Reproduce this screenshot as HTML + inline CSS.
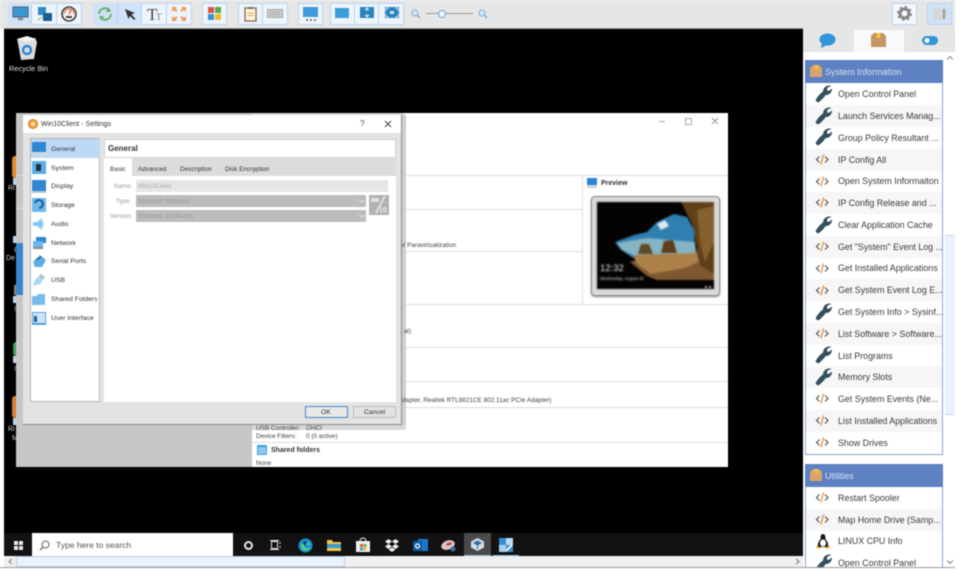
<!DOCTYPE html>
<html><head><meta charset="utf-8"><title>Win10Client</title>
<style>
html,body{margin:0;padding:0;background:#fff}
#r{position:relative;width:960px;height:573px;overflow:hidden;background:#fff;font-family:"Liberation Sans",sans-serif;filter:blur(.5px)}
#r div,#r svg,#r span{position:absolute}
.t{white-space:nowrap;line-height:1}
.g{background:#eef4fc;border:1px solid #bcd3ef;box-sizing:border-box;top:3px;height:22px}
.b{top:3px;height:22px;border-right:1px solid #bcd3ef;box-sizing:border-box}
.on{background:#cfe2f8}
.it{left:838px;font-size:8.9px;color:#3a3a3a}
.n{left:51px;font-size:6.8px;color:#333}
.d{font-size:6.4px;color:#444}
.l{background:#dcdcdc;height:1px}
</style></head><body><div id="r">
<svg width="0" height="0" style="left:0;top:0">
<defs>
<g id="w"><path d="M1 15.500 L3 17 C5 16 9 12 10.500 9.500 C13 10 16 8 16.500 4.500 L13.500 6.500 L11.500 5.500 L12 2.500 L15 1 C11.500 .5 8.500 3 8.500 6.500 C6 8.500 2.500 12 1 15.500Z" fill="#34505c" stroke="#34505c" stroke-width=".9"/></g>
<g id="c"><path d="M4.500 3.500 L1.500 6.500 L4.500 9.500" fill="none" stroke="#555" stroke-width="1.200"/><path d="M10 3.500 L13 6.500 L10 9.500" fill="none" stroke="#555" stroke-width="1.200"/><path d="M8.500 1.500 L6 11.500" fill="none" stroke="#e88a2e" stroke-width="1.200"/></g>
<g id="bx"><path d="M1 4 L4 1 H13 L16 4 V15 H1Z" fill="#c49565"/><path d="M7 1 H10 L10.500 6 H6.500Z" fill="#f4c93c"/></g>
</defs></svg>

<!-- toolbar -->
<div style="left:0;top:0;width:955px;height:29px;background:#e6e6e6"></div>
<div style="left:4px;top:28px;width:799px;height:1px;background:#9a9a9a"></div>

<div class="g" style="left:8px;width:74px"></div>
<div class="b on" style="left:8px;width:24px"></div>
<div class="b" style="left:32px;width:25px"></div>
<svg style="left:12px;top:6px" width="17" height="16"><rect x="1" y="1" width="15" height="10" fill="#3b98d4" stroke="#4a5f70"/><rect x="6" y="12" width="5" height="2" fill="#777"/></svg>
<svg style="left:37px;top:6px" width="16" height="17"><rect x="1" y="1" width="8" height="8" fill="#2d8bc4"/><rect x="6" y="7" width="9" height="8" fill="#14608f"/><path d="M1 14 l4 -3" stroke="#7bbf7b"/></svg>
<svg style="left:61px;top:6px" width="16" height="16"><circle cx="8" cy="8" r="7" fill="#f6f1e8" stroke="#3f3f3f" stroke-width="1.600"/><path d="M3 8 a5 5 0 0 1 10 0" fill="none" stroke="#d46a4a"/><path d="M8 8 L10 4" stroke="#c33"/><rect x="5" y="10" width="6" height="2" fill="#444"/></svg>

<div class="g" style="left:93px;width:99px"></div>
<div class="b on" style="left:93px;width:25px"></div>
<div class="b on" style="left:118px;width:24px"></div>
<div class="b" style="left:142px;width:25px"></div>
<svg style="left:97px;top:6px" width="16" height="16"><path d="M2 8 A6 6 0 0 1 13 5" fill="none" stroke="#6cb36c" stroke-width="2"/><path d="M14 8 A6 6 0 0 1 3 11" fill="none" stroke="#6cb36c" stroke-width="2"/><path d="M11 1 L14 6 L9 6Z M5 15 L2 10 L7 10Z" fill="#6cb36c"/></svg>
<svg style="left:124px;top:8px" width="13" height="13"><path d="M1 1 L11 5 L7.500 6.500 L11.500 11 L10 12 L6 8 L4.500 11Z" fill="#333"/></svg>
<div class="t" style="left:147px;top:5px;font:17px 'Liberation Serif',serif;color:#444">T</div>
<div class="t" style="left:156px;top:12px;font:9px 'Liberation Serif',serif;color:#777">T</div>
<svg style="left:171px;top:6px" width="16" height="16" fill="#ef9a50"><path d="M1 1h5l-1.500 1.500 2 2-1.500 1.500-2-2L1 6Z"/><path d="M15 1h-5l1.500 1.500-2 2 1.500 1.500 2-2L15 6Z"/><path d="M1 15h5l-1.500-1.500 2-2-1.500-1.500-2 2L1 10Z"/><path d="M15 15h-5l1.500-1.500-2-2 1.500-1.500 2 2L15 10Z"/></svg>

<div class="g" style="left:202px;width:25px"></div>
<svg style="left:208px;top:7px" width="13" height="13"><rect width="6" height="6" fill="#d9534a"/><rect x="7" width="6" height="6" fill="#5aa84a"/><rect y="7" width="6" height="6" fill="#3a8fd4"/><rect x="7" y="7" width="6" height="6" fill="#f1bb2a"/></svg>

<div class="g" style="left:238px;width:50px"></div>
<div class="b" style="left:238px;width:25px"></div>
<svg style="left:244px;top:7px" width="13" height="15"><rect x="1" y="1" width="11" height="13" fill="#fbf3e0" stroke="#8a6a48" stroke-width="1.300"/><rect x="4" y="0" width="5" height="2" fill="#8a6a48"/><path d="M3.500 6h6M3.500 8.500h6" stroke="#e2a24a"/></svg>
<svg style="left:267px;top:9px" width="17" height="10"><rect x=".5" y=".5" width="15" height="8" fill="#c9c9c9" stroke="#aaa"/><path d="M3 3h10M3 5.500h10" stroke="#8e8e8e" stroke-dasharray="1 1"/></svg>

<div class="g" style="left:298px;width:25px"></div>
<svg style="left:303px;top:7px" width="16" height="15"><rect width="15" height="10" fill="#3c9bd8"/><path d="M3 13h2M7 13h2M11 13h2" stroke="#556" stroke-width="1.500"/></svg>

<div class="g" style="left:330px;width:74px"></div>
<div class="b" style="left:330px;width:25px"></div>
<div class="b" style="left:355px;width:24px"></div>
<svg style="left:335px;top:8px" width="15" height="11"><rect width="14" height="10" fill="#3c9bd8"/></svg>
<svg style="left:360px;top:7px" width="15" height="12"><rect width="14" height="11" fill="#2a83bc"/><path d="M7 1v3M7 10V7M5 3l2-2 2 2M5 8l2 2 2-2" stroke="#cfe6f5" fill="none"/></svg>
<svg style="left:385px;top:7px" width="15" height="12"><rect width="14" height="11" fill="#2a83bc"/><path d="M1 1h3M1 1v3M13 1h-3M13 1v3M1 10h3M1 10V7M13 10h-3M13 10V7" stroke="#cfe6f5"/><rect x="5" y="4" width="4" height="3" fill="#cfe6f5"/></svg>

<svg style="left:411px;top:9px" width="10" height="10"><circle cx="4" cy="4" r="3" fill="#d4e6f5" stroke="#7fb0d6"/><path d="M6 6l3 3" stroke="#7fb0d6" stroke-width="1.500"/></svg>
<div style="left:426px;top:13px;width:47px;height:1px;background:#999"></div>
<div style="left:438px;top:10px;width:6px;height:6px;border-radius:50%;background:#f1f6fb;border:1px solid #6ea3cf"></div>
<svg style="left:478px;top:9px" width="10" height="10"><circle cx="4" cy="4" r="3" fill="#d4e6f5" stroke="#7fb0d6"/><path d="M6 6l3 3" stroke="#7fb0d6" stroke-width="1.500"/></svg>

<div class="g" style="left:892px;width:25px;background:#f4f8fd"></div>
<svg style="left:897px;top:6px" width="15" height="15"><circle cx="7.500" cy="7.500" r="4.500" fill="none" stroke="#888" stroke-width="3"/><circle cx="7.500" cy="7.500" r="6.500" fill="none" stroke="#888" stroke-width="2" stroke-dasharray="2.500 2.600"/></svg>
<div class="g" style="left:927px;width:25px;background:#cfe2f8"></div>
<div style="left:933px;top:8px;width:14px;height:12px;background:#d8d8d8"></div>
<div style="left:943px;top:9px;width:2px;height:10px;background:#999"></div>

<!-- desktop -->
<div style="left:4px;top:29px;width:799px;height:504px;background:#000"></div>
<svg style="left:15px;top:35px" width="23" height="26"><path d="M2 4 L20 3 L22 7 L19 24 L6 25 L3 8Z" fill="#d9dde0"/><path d="M2 4 L12 1 L21 4 L12 7Z" fill="#f1f3f4"/><circle cx="12" cy="15" r="4" fill="none" stroke="#2a86d8" stroke-width="2.400"/></svg>
<div class="t" style="left:9px;top:65px;font-size:7.400px;color:#ddd">Recycle Bin</div>

<!-- clipped desktop icons -->
<div style="left:12px;top:156px;width:4px;height:22px;background:#e08a30;border-radius:3px 0 0 3px"></div>
<div style="left:13px;top:178px;width:3px;height:7px;background:#bcd4ea"></div>
<div class="t" style="left:8px;top:185px;font-size:7px;color:#ccc">Ri</div>
<div style="left:13px;top:236px;width:3px;height:7px;background:#bcd4ea"></div>
<div class="t" style="left:14px;top:247px;font-size:7px;color:#ccc">C</div>
<div class="t" style="left:6px;top:255px;font-size:7px;color:#ccc">De</div>
<div style="left:14px;top:285px;width:2px;height:10px;background:#8a8a7a"></div>
<div style="left:13px;top:296px;width:3px;height:7px;background:#bcd4ea"></div>
<div class="t" style="left:14px;top:306px;font-size:7px;color:#999">C</div>
<div style="left:13px;top:342px;width:3px;height:14px;background:#3f9a5a;border-radius:3px 0 0 3px"></div>
<div style="left:13px;top:356px;width:3px;height:7px;background:#bcd4ea"></div>
<div class="t" style="left:14px;top:366px;font-size:7px;color:#999">C</div>
<div style="left:12px;top:396px;width:4px;height:22px;background:#d97e30;border-radius:3px 0 0 3px"></div>
<div style="left:13px;top:418px;width:3px;height:7px;background:#bcd4ea"></div>
<div class="t" style="left:8px;top:426px;font-size:7px;color:#ccc">Ri</div>
<div class="t" style="left:12px;top:435px;font-size:7px;color:#ccc">M</div>

<!-- VM window -->
<div style="left:16px;top:113px;width:712px;height:354px;background:#fff"></div>
<div style="left:16px;top:113px;width:236px;height:354px;background:#c6c6c6"></div>
<div style="left:252px;top:113px;width:152px;height:2px;background:#d8d8d8"></div>
<div style="left:16px;top:243px;width:7px;height:52px;background:#3a85cc"></div>
<div style="left:16px;top:175px;width:7px;height:1px;background:#e0e0e0"></div>
<div style="left:16px;top:208px;width:7px;height:1px;background:#e0e0e0"></div>
<div class="l" style="left:400px;top:175px;width:328px"></div>
<div class="l" style="left:400px;top:209px;width:182px"></div>
<div class="l" style="left:400px;top:251px;width:182px"></div>
<div class="l" style="left:400px;top:304px;width:328px"></div>
<div class="l" style="left:400px;top:347px;width:328px"></div>
<div class="l" style="left:400px;top:381px;width:328px"></div>
<div class="l" style="left:400px;top:407px;width:328px"></div>
<div class="l" style="left:252px;top:442px;width:476px"></div>
<div style="left:582px;top:175px;width:1px;height:129px;background:#dcdcdc"></div>
<div style="left:659px;top:121px;width:6px;height:1px;background:#aaa"></div>
<div style="left:685px;top:118px;width:5px;height:5px;border:1px solid #aaa"></div>
<svg style="left:711px;top:117px" width="8" height="8"><path d="M1 1l6 6M7 1l-6 6" stroke="#999"/></svg>
<svg style="left:587px;top:178px" width="10" height="10"><rect width="10" height="7" fill="#2a86d8"/><rect y="7" width="10" height="3" fill="#cfd8e0"/></svg>
<div class="t" style="left:601px;top:180px;font-size:7px;font-weight:bold;color:#333">Preview</div>
<svg style="left:257px;top:445px" width="10" height="10"><rect width="10" height="10" rx="1" fill="#3d9ade"/><rect x="1" y="2" width="8" height="7" fill="#8cc8ef"/></svg>
<div class="t" style="left:271px;top:447px;font-size:7px;font-weight:bold;color:#333">Shared folders</div>
<div class="t d" style="left:256px;top:461px">None</div>

<!-- preview image -->
<div style="left:591px;top:196px;width:129px;height:100px;background:#d9d9d9;border:1px solid #8e8e8e;border-radius:4px;box-sizing:border-box;box-shadow:0 1px 2px #888"></div>
<svg style="left:597px;top:202px;filter:blur(.7px)" width="117" height="87">
<rect width="117" height="87" fill="#050302"/>
<path d="M84 0 H117 V72 L96 66 L100 45 L95 22 Z" fill="#5f4019"/>
<path d="M100 8 L117 4 V40 L108 60 L103 40Z" fill="#84602c"/>
<path d="M33 60 L52 54 L100 54 L104 64 L117 72 V78 L60 78 L50 74Z" fill="#7f5730"/>
<path d="M18 40 L37 33 L50 30 L60 20 L77 12 L90 15 L97 28 L98 45 L100 54 L52 54 L36 56 L23 47Z" fill="#2f7fb0"/>
<path d="M60 22 L68 18 L72 24 L64 28Z" fill="#dfe8ee"/>
<path d="M20 41 L50 36 L98 40 L99 52 L40 55 L25 48Z" fill="#86b4c4"/>
<path d="M36 53 L100 51 L102 60 L88 66 L54 72 L40 62Z" fill="#ad8048"/>
<path d="M41 52 L44 42 L52 42 L56 52Z" fill="#5e4a28"/>
<path d="M64 51 L67 39 L76 38 L80 51Z" fill="#5c3d1e"/>
<text x="3" y="69" font-family="Liberation Sans" font-size="9.500" fill="#e8e8e8">12:32</text>
<text x="3" y="78" font-family="Liberation Sans" font-size="4.300" fill="#cfcfcf">Wednesday, August 26</text>
<rect x="108" y="84" width="2" height="2" fill="#bbb"/><rect x="112" y="84" width="2" height="2" fill="#bbb"/>
</svg>

<!-- settings dialog -->
<div style="left:400px;top:115px;width:6px;height:315px;background:#cfcfcf"></div>
<div style="left:252px;top:425px;width:154px;height:5px;background:#d8d8d8"></div>
<div class="t d" style="left:399px;top:243px">-V Paravirtualization</div>
<div class="t d" style="left:404px;top:329px">al)</div>
<div class="t d" style="left:402px;top:398px">dapter, Realtek RTL8821CE 802.11ac PCIe Adapter)</div>
<div style="left:23px;top:115px;width:379px;height:310px;background:#e3e3e3;border-right:1px solid #888;border-bottom:1px solid #888;box-sizing:border-box"></div>
<div style="left:23px;top:115px;width:378px;height:18px;background:#fff"></div>
<svg style="left:28px;top:119px" width="10" height="10"><circle cx="5" cy="5" r="4.500" fill="#f3a53a" stroke="#c9781a"/><circle cx="5" cy="5" r="2" fill="#fbe6b8"/></svg>
<div class="t" style="left:41px;top:121px;font-size:7.100px;color:#333">Win10Client - Settings</div>
<div class="t" style="left:360px;top:120px;font-size:8px;color:#444">?</div>
<svg style="left:384px;top:120px" width="8" height="8"><path d="M1 1l6 6M7 1l-6 6" stroke="#444"/></svg>

<div style="left:30px;top:138px;width:70px;height:264px;background:#fff;border:1px solid #b5b5b5;box-sizing:border-box"></div>
<div style="left:31px;top:139px;width:69px;height:19px;background:#bcdaf4"></div>
<div class="t n" style="top:147px">General</div>
<div class="t n" style="top:166px">System</div>
<div class="t n" style="top:184px">Display</div>
<div class="t n" style="top:203px">Storage</div>
<div class="t n" style="top:222px">Audio</div>
<div class="t n" style="top:241px">Network</div>
<div class="t n" style="top:259px">Serial Ports</div>
<div class="t n" style="top:278px">USB</div>
<div class="t n" style="top:297px">Shared Folders</div>
<div class="t n" style="top:316px">User Interface</div>
<svg style="left:32px;top:142px" width="14" height="14"><rect x="0" y="0" width="14" height="10" fill="#2f86d2"/><rect y="10" width="14" height="3" fill="#cfd8e0"/></svg>
<svg style="left:32px;top:161px" width="14" height="14"><rect width="14" height="13" fill="#56b0ea"/><rect x="4" y="3" width="5" height="7" fill="#23303a"/></svg>
<svg style="left:32px;top:180px" width="14" height="14"><rect width="14" height="11" fill="#2f86d2"/><rect y="11" width="14" height="2" fill="#b6c8d8"/></svg>
<svg style="left:32px;top:198px" width="14" height="15"><rect width="14" height="14" fill="#6ab8ec"/><path d="M3 5a4 4 0 1 1 4 5" fill="none" stroke="#1a5c94" stroke-width="2"/></svg>
<svg style="left:32px;top:217px" width="14" height="14"><path d="M1 5H5L10 1V13L5 9H1Z" fill="#86c8f0"/><path d="M10 3Q14 7 10 11" fill="#a8d8f5"/></svg>
<svg style="left:32px;top:236px" width="14" height="14"><rect x="4" y="1" width="10" height="6" fill="#2f86d2"/><rect x="1" y="5" width="10" height="6" fill="#6ab8ec"/><rect x="1" y="11" width="10" height="2" fill="#889"/></svg>
<svg style="left:32px;top:254px" width="14" height="15"><path d="M1 8L8 1L14 6L10 13H3Z" fill="#5aaee8"/><path d="M4 6L9 3" stroke="#234" /></svg>
<svg style="left:32px;top:273px" width="14" height="15"><path d="M1 13L3 7L9 1L13 4L8 11Z" fill="#a6d6f4"/><path d="M9 1L13 4L11 6L7 3Z" fill="#bbb"/></svg>
<svg style="left:32px;top:293px" width="14" height="13"><path d="M0 3H5L6 1H13V12H0Z" fill="#75bcec"/></svg>
<svg style="left:32px;top:312px" width="14" height="13"><rect width="14" height="12" fill="#c9e5f8" stroke="#2f86d2" stroke-width="1.500"/><rect x="2" y="4" width="3" height="6" fill="#1f5d90"/></svg>

<div style="left:104px;top:139px;width:292px;height:19px;background:#fff;border:1px solid #d2d2d2;box-sizing:border-box"></div>
<div class="t" style="left:108px;top:145px;font-size:8px;font-weight:bold;color:#333">General</div>
<div style="left:104px;top:158px;width:292px;height:18px;background:#dcdcdc"></div>
<div style="left:104px;top:176px;width:292px;height:226px;background:#fff"></div>
<div style="left:104px;top:158px;width:28px;height:18px;background:#fff"></div>
<div class="t" style="left:110px;top:167px;font-size:6.400px;color:#333">Basic</div>
<div class="t" style="left:138px;top:167px;font-size:6.400px;color:#333">Advanced</div>
<div class="t" style="left:180px;top:167px;font-size:6.400px;color:#333">Description</div>
<div class="t" style="left:225px;top:167px;font-size:6.400px;color:#333">Disk Encryption</div>
<div class="t" style="left:114px;top:184px;font-size:6.200px;color:#999">Name:</div>
<div class="t" style="left:116px;top:199px;font-size:6.200px;color:#999">Type:</div>
<div class="t" style="left:110px;top:214px;font-size:6.200px;color:#999">Version:</div>
<div style="left:136px;top:180px;width:252px;height:12px;background:#e6e6e6"></div>
<div class="t" style="left:138px;top:184px;font-size:6.200px;color:#aaa">Win10Client</div>
<div style="left:136px;top:195px;width:230px;height:12px;background:#bcbcbc"></div>
<div class="t" style="left:138px;top:199px;font-size:6.200px;color:#999">Microsoft Windows</div>
<div style="left:136px;top:210px;width:230px;height:12px;background:#bcbcbc"></div>
<div class="t" style="left:138px;top:214px;font-size:6.200px;color:#999">Windows 10 (64-bit)</div>
<svg style="left:358px;top:198px" width="8" height="6"><path d="M1 2l3 2 3-2" fill="none" stroke="#e5e5e5"/></svg>
<svg style="left:358px;top:213px" width="8" height="6"><path d="M1 2l3 2 3-2" fill="none" stroke="#e5e5e5"/></svg>
<svg style="left:369px;top:195px" width="20" height="20"><rect width="20" height="20" fill="#b2b2b2"/><path d="M2 3h8v4H2Z" fill="#e0e0e0"/><path d="M16 1L7 18" stroke="#ececec" stroke-width="1.500"/><text x="10" y="17" font-family="Liberation Sans" font-size="7" font-weight="bold" fill="#eee">10</text></svg>

<div style="left:305px;top:406px;width:43px;height:12px;background:#e8e8e8;border:1px solid #3d87c8;box-sizing:border-box;outline:0 solid #000"></div>
<div class="t" style="left:321px;top:410px;font-size:6.800px;color:#333">OK</div>
<div style="left:353px;top:406px;width:43px;height:12px;background:#e2e2e2;border:1px solid #bdbdbd;box-sizing:border-box"></div>
<div class="t" style="left:364px;top:410px;font-size:6.800px;color:#333">Cancel</div>

<div class="t d" style="left:256px;top:426px">USB Controller:</div>
<div class="t d" style="left:306px;top:426px">OHCI</div>
<div class="t d" style="left:256px;top:434px">Device Filters:</div>
<div class="t d" style="left:306px;top:434px">0 (0 active)</div>

<!-- taskbar -->
<div style="left:4px;top:533px;width:799px;height:23px;background:#121212"></div>
<svg style="left:14px;top:541px" width="9" height="9" fill="#e8e8e8"><rect width="4" height="4"/><rect x="5" width="4" height="4"/><rect y="5" width="4" height="4"/><rect x="5" y="5" width="4" height="4"/></svg>
<div style="left:32px;top:533px;width:201px;height:23px;background:#fff"></div>
<svg style="left:39px;top:540px" width="11" height="11"><circle cx="6.500" cy="4.500" r="3.500" fill="none" stroke="#666"/><path d="M4 7L1 10" stroke="#666" stroke-width="1.300"/></svg>
<div class="t" style="left:56px;top:541px;font-size:8.500px;color:#555">Type here to search</div>
<div style="left:244px;top:541px;width:5px;height:5px;border:2px solid #e8e8e8;border-radius:50%"></div>
<svg style="left:270px;top:540px" width="11" height="10"><rect x="1.500" y="1.500" width="6" height="7" fill="none" stroke="#ddd"/><path d="M0 .5h9M0 9.500h9M10 2v2M10 6v2" stroke="#ddd"/></svg>
<svg style="left:298px;top:538px" width="15" height="15"><circle cx="7.500" cy="7.500" r="7" fill="#1b8fd0"/><path d="M3 8a4.500 4 0 0 1 9 -1H6q0 3 3.500 3 2 0 3.500-1-2 4-6 3.500Q3 12 3 8Z" fill="#54d08a"/><circle cx="7" cy="5" r="2" fill="#0a4d80"/></svg>
<svg style="left:327px;top:539px" width="14" height="13"><path d="M0 1H5L6 3H14V12H0Z" fill="#f0c44c"/><rect y="5" width="14" height="4" fill="#3a9ad0"/></svg>
<svg style="left:356px;top:537px" width="14" height="15"><path d="M4 4a3 3 0 0 1 6 0" fill="none" stroke="#eee"/><rect y="4" width="14" height="11" fill="#f0f0f0"/><rect x="4" y="7" width="3" height="3" fill="#e0533d"/><rect x="7.500" y="7" width="3" height="3" fill="#6ab04a"/><rect x="4" y="10.500" width="3" height="3" fill="#3a9ad0"/><rect x="7.500" y="10.500" width="3" height="3" fill="#f2b72c"/></svg>
<svg style="left:385px;top:539px" width="14" height="13" fill="#f0f0f0"><path d="M3.500 0L7 2.500 3.500 5 0 2.500ZM10.500 0L14 2.500 10.500 5 7 2.500ZM3.500 5L7 7.500 3.500 10 0 7.500ZM10.500 5L14 7.500 10.500 10 7 7.500ZM3.500 10.500L7 8.500 10.500 10.500 7 13Z"/></svg>
<svg style="left:413px;top:538px" width="15" height="15"><rect x="5" y="1" width="10" height="12" fill="#1e78c8"/><rect x="0" y="3" width="9" height="10" fill="#0d5ca6"/><circle cx="4.500" cy="8" r="2" fill="none" stroke="#fff" stroke-width="1.200"/></svg>
<svg style="left:441px;top:538px" width="16" height="15"><ellipse cx="7" cy="7" rx="7" ry="4.500" fill="#dcc7c7" transform="rotate(-20 7 7)"/><ellipse cx="8" cy="6" rx="3" ry="1.300" fill="#c0404a" transform="rotate(-20 8 6)"/><circle cx="12" cy="11" r="2.500" fill="#3a6ea8"/></svg>
<div style="left:464px;top:533px;width:27px;height:23px;background:#4a4a4a"></div>
<div style="left:464px;top:555px;width:27px;height:1px;background:#8ab4d4"></div>
<svg style="left:470px;top:537px" width="15" height="15"><path d="M7.500 1L14 4.500V10.500L7.500 14 1 10.500V4.500Z" fill="#d5dde5"/><path d="M7.500 4L11 6 7.500 8 4 6ZM7.500 8V12" fill="#2d6ea6" stroke="#2d6ea6"/></svg>
<div style="left:493px;top:555px;width:26px;height:1px;background:#8ab4d4"></div>
<svg style="left:499px;top:538px" width="14" height="14"><rect width="14" height="14" fill="#3a8ed0"/><rect x="7" width="7" height="7" fill="#bcdcf5"/><rect y="7" width="7" height="7" fill="#a8d0ef"/><path d="M7 13L13 7" stroke="#eee" stroke-width="2"/></svg>

<!-- bottom scrollbar -->
<div style="left:4px;top:556px;width:799px;height:11px;background:#f0f0f0"></div>
<div style="left:16px;top:556px;width:329px;height:11px;background:#eaf2fc;border:1px solid #bcd0e8;box-sizing:border-box"></div>
<div style="left:0;top:567px;width:955px;height:1px;background:#9a9a9a"></div>
<svg style="left:8px;top:558px" width="5" height="7"><path d="M4 1L1 3.500 4 6" fill="none" stroke="#777"/></svg>
<svg style="left:795px;top:558px" width="5" height="7"><path d="M1 1L4 3.500 1 6" fill="none" stroke="#777"/></svg>

<!-- right panel -->
<div style="left:803px;top:29px;width:152px;height:539px;background:#fff"></div>
<div style="left:803px;top:29px;width:152px;height:23px;background:#e6e6e6"></div>
<div style="left:854px;top:30px;width:50px;height:22px;background:#f9f9f9"></div>
<svg style="left:819px;top:33px" width="17" height="15"><ellipse cx="8.500" cy="6.500" rx="8" ry="6" fill="#2f95dc"/><path d="M3 10L2 15 8 12Z" fill="#2f95dc"/></svg>
<svg style="left:870px;top:32px" width="17" height="17"><use href="#bx"/></svg>
<svg style="left:922px;top:36px" width="17" height="10"><rect width="16" height="9" rx="4.500" fill="#2f95dc"/><circle cx="5" cy="4.500" r="2.500" fill="#fff"/></svg>

<!-- panel scrollbar -->
<div style="left:945px;top:235px;width:10px;height:180px;background:#eaf2fc;border-top:1px solid #c5d8ee;border-bottom:1px solid #c5d8ee;box-sizing:border-box"></div>
<svg style="left:946px;top:55px" width="8" height="6"><path d="M1 4.500L4 1.500 7 4.500" fill="none" stroke="#888"/></svg>
<svg style="left:946px;top:559px" width="8" height="6"><path d="M1 1.500L4 4.500 7 1.500" fill="none" stroke="#888"/></svg>

<!-- section 1 -->
<div style="left:805px;top:60px;width:138px;height:395px;border:1px solid #8ba8d6;box-sizing:border-box"></div>
<div style="left:805px;top:60px;width:138px;height:23px;background:#5d81c2"></div>
<svg style="left:810px;top:65px" width="12" height="13"><path d="M0 3L3 0H9L12 3V12H0Z" fill="#d9a56c"/><path d="M5 0H7.500L8 4H4.500Z" fill="#f4c93c"/></svg>
<div class="t" style="left:825px;top:68px;font-size:8.900px;color:#d6e1f2">System Information</div>

<div style="left:806px;top:105px;width:136px;height:22px;background:#f6f6f6"></div>
<div style="left:806px;top:149px;width:136px;height:22px;background:#f6f6f6"></div>
<div style="left:806px;top:192px;width:136px;height:22px;background:#f6f6f6"></div>
<div style="left:806px;top:236px;width:136px;height:22px;background:#f6f6f6"></div>
<div style="left:806px;top:279px;width:136px;height:22px;background:#f6f6f6"></div>
<div style="left:806px;top:323px;width:136px;height:22px;background:#f6f6f6"></div>
<div style="left:806px;top:366px;width:136px;height:22px;background:#f6f6f6"></div>
<div style="left:806px;top:410px;width:136px;height:22px;background:#f6f6f6"></div>

<svg style="left:815px;top:85px" width="17" height="18"><use href="#w"/></svg><div class="t it" style="top:90px">Open Control Panel</div>
<svg style="left:815px;top:107px" width="17" height="18"><use href="#w"/></svg><div class="t it" style="top:112px">Launch Services Manag...</div>
<svg style="left:815px;top:128px" width="17" height="18"><use href="#w"/></svg><div class="t it" style="top:134px">Group Policy Resultant ...</div>
<svg style="left:815px;top:153px" width="17" height="14"><use href="#c"/></svg><div class="t it" style="top:156px">IP Config All</div>
<svg style="left:815px;top:175px" width="17" height="14"><use href="#c"/></svg><div class="t it" style="top:177px">Open System Informaiton</div>
<svg style="left:815px;top:196px" width="17" height="14"><use href="#c"/></svg><div class="t it" style="top:199px">IP Config Release and ...</div>
<svg style="left:815px;top:216px" width="17" height="18"><use href="#w"/></svg><div class="t it" style="top:221px">Clear Application Cache</div>
<svg style="left:815px;top:240px" width="17" height="14"><use href="#c"/></svg><div class="t it" style="top:243px">Get "System" Event Log ...</div>
<svg style="left:815px;top:262px" width="17" height="14"><use href="#c"/></svg><div class="t it" style="top:264px">Get Installed Applications</div>
<svg style="left:815px;top:284px" width="17" height="14"><use href="#c"/></svg><div class="t it" style="top:286px">Get System Event Log E...</div>
<svg style="left:815px;top:303px" width="17" height="18"><use href="#w"/></svg><div class="t it" style="top:308px">Get System Info &gt; Sysinf...</div>
<svg style="left:815px;top:327px" width="17" height="14"><use href="#c"/></svg><div class="t it" style="top:330px">List Software &gt; Software...</div>
<svg style="left:815px;top:346px" width="17" height="18"><use href="#w"/></svg><div class="t it" style="top:352px">List Programs</div>
<svg style="left:815px;top:368px" width="17" height="18"><use href="#w"/></svg><div class="t it" style="top:373px">Memory Slots</div>
<svg style="left:815px;top:392px" width="17" height="14"><use href="#c"/></svg><div class="t it" style="top:395px">Get System Events (Ne...</div>
<svg style="left:815px;top:414px" width="17" height="14"><use href="#c"/></svg><div class="t it" style="top:417px">List Installed Applications</div>
<svg style="left:815px;top:436px" width="17" height="14"><use href="#c"/></svg><div class="t it" style="top:439px">Show Drives</div>

<!-- section 2 -->
<div style="left:805px;top:464px;width:138px;height:104px;border:1px solid #8ba8d6;border-bottom:0;box-sizing:border-box"></div>
<div style="left:805px;top:464px;width:138px;height:23px;background:#5d81c2"></div>
<svg style="left:810px;top:469px" width="12" height="13"><path d="M0 3L3 0H9L12 3V12H0Z" fill="#d9a56c"/><path d="M5 0H7.500L8 4H4.500Z" fill="#f4c93c"/></svg>
<div class="t" style="left:825px;top:472px;font-size:8.900px;color:#d6e1f2">Utilities</div>
<div style="left:806px;top:509px;width:136px;height:22px;background:#f6f6f6"></div>
<svg style="left:815px;top:491px" width="17" height="14"><use href="#c"/></svg><div class="t it" style="top:494px">Restart Spooler</div>
<svg style="left:815px;top:513px" width="17" height="14"><use href="#c"/></svg><div class="t it" style="top:516px">Map Home Drive (Samp...</div>
<svg style="left:816px;top:533px" width="14" height="16"><path d="M7 1C4.500 1 4.500 4 4.500 6 3 8 1.500 10 2 12L1 14H13L12 12C12.500 10 11 8 9.500 6 9.500 4 9.500 1 7 1Z" fill="#1a1a1a"/><ellipse cx="7" cy="10" rx="3" ry="3.500" fill="#fff"/><path d="M1 13.500L4.500 15H1ZM13 13.500L9.500 15H13Z" fill="#f0b030" stroke="#f0b030"/></svg><div class="t it" style="top:537px">LINUX CPU Info</div>
<svg style="left:815px;top:554px" width="17" height="14"><use href="#w"/></svg><div class="t it" style="top:559px">Open Control Panel</div>
<div style="left:803px;top:568px;width:157px;height:5px;background:#fff"></div>
<div style="left:803px;top:567px;width:152px;height:1px;background:#9a9a9a"></div>
</div></body></html>
